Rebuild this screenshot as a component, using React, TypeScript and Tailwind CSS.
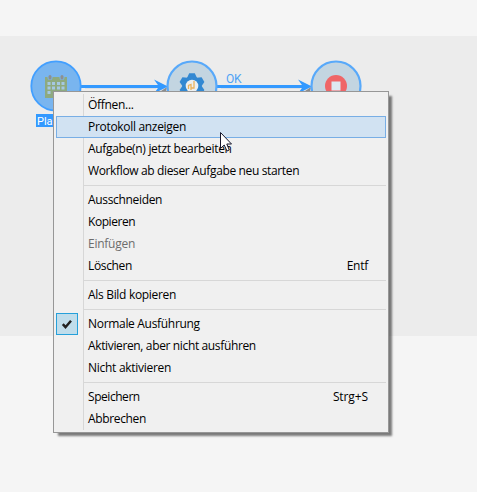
import React from "react";

type Item = {
  label: string;
  tracking: string;
  shortcut?: string;
  shortcutTracking?: string;
  active?: boolean;
  disabled?: boolean;
  checked?: boolean;
};

const groups: Item[][] = [
  [
    { label: "Öffnen...", tracking: "tracking-[-0.3px]" },
    { label: "Protokoll anzeigen", tracking: "tracking-[-0.31px]", active: true },
    { label: "Aufgabe(n) jetzt bearbeiten", tracking: "tracking-[-0.31px]" },
    { label: "Workflow ab dieser Aufgabe neu starten", tracking: "tracking-[-0.36px]" },
  ],
  [
    { label: "Ausschneiden", tracking: "tracking-[-0.33px]" },
    { label: "Kopieren", tracking: "tracking-[-0.45px]" },
    { label: "Einfügen", tracking: "tracking-[-0.25px]", disabled: true },
    { label: "Löschen", tracking: "tracking-[-0.35px]", shortcut: "Entf", shortcutTracking: "tracking-[-0.25px]" },
  ],
  [{ label: "Als Bild kopieren", tracking: "tracking-[-0.31px]" }],
  [
    { label: "Normale Ausführung", tracking: "tracking-[-0.31px]", checked: true },
    { label: "Aktivieren, aber nicht ausführen", tracking: "tracking-[-0.36px]" },
    { label: "Nicht aktivieren", tracking: "tracking-[-0.28px]" },
  ],
  [
    { label: "Speichern", tracking: "tracking-[-0.45px]", shortcut: "Strg+S", shortcutTracking: "tracking-[-0.1px]" },
    { label: "Abbrechen", tracking: "tracking-[-0.35px]" },
  ],
];

function Arrow({ from, to }: { from: number; to: number }) {
  return (
    <g>
      <path d={`M${from + 4} 88.5H${to - 12}`} stroke="#d9dfe6" strokeWidth="1" />
      <path d={`M${to - 10} 93L${to - 1} 87L${to - 2} 92L${to - 8} 95Z`} fill="#8c8c8c" />
      <path d={`M${from} 86.5H${to - 8}`} stroke="#3399ff" strokeWidth="3" />
      <path d={`M${to} 86.5L${to - 14} 79.5L${to - 9} 86.5L${to - 14} 93.5Z`} fill="#3399ff" />
    </g>
  );
}

function Diagram() {
  return (
    <svg className="block" width="477" height="300" viewBox="0 36 477 300">
      <Arrow from={81} to={168} />
      <Arrow from={217} to={312} />
      <circle cx="56" cy="86" r="24.7" fill="#79b5ef" stroke="#429fff" strokeWidth="1.8" />
      <circle cx="192" cy="86" r="24.5" fill="#c3d5e1" stroke="#58a9fa" strokeWidth="2.2" />
      <circle cx="336" cy="86" r="24.5" fill="#c3d5e1" stroke="#58a9fa" strokeWidth="2.2" />
      <path fill="#8eaa80" d="M45 77H67V98H45Z" />
      <path fill="#a5c8e2" d="M47.5 82h3v3h-3zM52 82h3v3h-3zM57 82h3v3h-3zM61.5 82h3v3h-3zM47.5 86.5h3v3h-3zM52 86.5h3v3h-3zM57 86.5h3v3h-3zM61.5 86.5h3v3h-3zM47.5 91h3v3h-3z" />
      <path stroke="#79b5ef" strokeWidth="5" strokeLinecap="round" d="M50 76.5V77.5M62 76.5V77.5" />
      <path stroke="#8d9090" strokeWidth="3" strokeLinecap="round" d="M50 76.5V78M62 76.5V78" />
      <g fill="#3288d2">
        <circle cx="192" cy="86" r="9.8" />
        {[0, 60, 120, 180, 240, 300].map((angle) => (
          <path key={angle} d="M187 78L189.2 73.3H194.8L197 78Z" transform={`rotate(${angle} 192 86)`} />
        ))}
      </g>
      <circle cx="192" cy="86" r="6.3" fill="#eceff0" />
      <path d="M194 81V88H191V84.5L188.5 85.5V89M191 88V90" fill="none" stroke="#ecb35c" strokeWidth="1.3" />
      <circle cx="336" cy="86" r="11" fill="#ef6668" />
      <rect x="331.5" y="81.5" width="9" height="9" fill="#dee8f1" />
    </svg>
  );
}

function MenuRow({ item }: { item: Item }) {
  const tone = item.disabled ? "text-[#6d6d6d]" : "text-black";
  const fill = item.active ? "border-[#78aee5] bg-[#d1e2f2]" : "border-transparent";
  return (
    <li className={`flex h-[22px] border ${fill} ${tone}`}>
      <span className="-my-px -ml-px flex w-8 shrink-0">
        {item.checked && (
          <span className="flex size-[22px] items-center justify-center border border-[#26a0da] bg-[#c0ddeb]">
            <svg width="12" height="12" viewBox="0 0 12 12">
              <path d="M1.8 6.2L4.5 9.2L10 2.8" fill="none" stroke="#212121" strokeWidth="2.5" />
            </svg>
          </span>
        )}
      </span>
      <span className={`grow ${item.tracking}`}>{item.label}</span>
      {item.shortcut && <span className={`pr-[17px] ${item.shortcutTracking}`}>{item.shortcut}</span>}
    </li>
  );
}

function ContextMenu() {
  return (
    <div className="absolute top-[91px] left-[53px] h-[342px] w-[336px] border border-[#979797] bg-[#f0f0f0] bg-[linear-gradient(#d7d7d7,#d7d7d7)] bg-[length:1px_336px] bg-[position:29px_2px] bg-no-repeat p-[2px] shadow-[4px_4px_2px_-1px_rgba(0,0,0,0.5)]">
      {groups.map((group, index) => (
        <React.Fragment key={index}>
          {index > 0 && (
            <div className="flex h-[7px] items-center pl-[28px]">
              <div className="h-px grow bg-[#d7d7d7]" />
            </div>
          )}
          <ul className="flex flex-col">
            {group.map((item) => (
              <MenuRow key={item.label} item={item} />
            ))}
          </ul>
        </React.Fragment>
      ))}
    </div>
  );
}

export default function App() {
  return (
    <main className="relative h-[492px] w-[477px] overflow-hidden bg-[#f5f5f5] pt-[36px] font-['Open_Sans',sans-serif] text-[12px] leading-[19px] whitespace-nowrap">
      <section className="h-[300px] bg-[#ececec]">
        <Diagram />
      </section>
      <span className="absolute top-[70px] left-[226px] font-['Roboto',sans-serif] text-[12px] tracking-[-0.3px] text-[#4fa3f5]">OK</span>
      <span className="absolute top-[114px] left-[36px] h-[13px] w-[40px] bg-[#3399ff] pl-px font-['Roboto',sans-serif] text-[11px] leading-[15px] text-white">Planer</span>
      <ContextMenu />
      <svg className="absolute top-[131px] left-[219px]" width="14" height="22" viewBox="0 0 14 22">
        <path d="M1.5 1.5V17.5L5.2 14L8 20L10.3 19L7.8 13H12.5Z" fill="white" stroke="#17172b" strokeWidth="1" />
      </svg>
    </main>
  );
}
